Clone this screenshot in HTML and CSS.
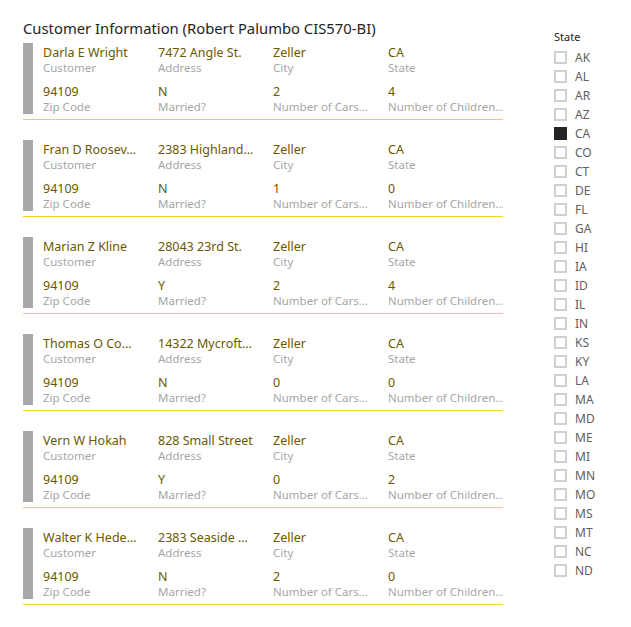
FILE: index.html
```html
<!DOCTYPE html>
<html>
<head>
<meta charset="utf-8">
<link rel="stylesheet" href="styles.css">
</head>
<body>
<div class="page">
  <section class="cards">
    <h1 class="title">Customer Information (Robert Palumbo CIS570-BI)</h1>
    <div class="card">
      <div class="bar"></div>
      <div class="fields">
        <div class="field"><div class="val">Darla E Wright</div><div class="lbl">Customer</div></div>
        <div class="field"><div class="val">7472 Angle St.</div><div class="lbl">Address</div></div>
        <div class="field"><div class="val">Zeller</div><div class="lbl">City</div></div>
        <div class="field"><div class="val">CA</div><div class="lbl">State</div></div>
        <div class="field"><div class="val">94109</div><div class="lbl">Zip Code</div></div>
        <div class="field"><div class="val">N</div><div class="lbl">Married?</div></div>
        <div class="field"><div class="val">2</div><div class="lbl">Number of Cars…</div></div>
        <div class="field"><div class="val">4</div><div class="lbl">Number of Children…</div></div>
      </div>
    </div>
    <div class="card">
      <div class="bar"></div>
      <div class="fields">
        <div class="field"><div class="val">Fran D Roosev…</div><div class="lbl">Customer</div></div>
        <div class="field"><div class="val">2383 Highland…</div><div class="lbl">Address</div></div>
        <div class="field"><div class="val">Zeller</div><div class="lbl">City</div></div>
        <div class="field"><div class="val">CA</div><div class="lbl">State</div></div>
        <div class="field"><div class="val">94109</div><div class="lbl">Zip Code</div></div>
        <div class="field"><div class="val">N</div><div class="lbl">Married?</div></div>
        <div class="field"><div class="val">1</div><div class="lbl">Number of Cars…</div></div>
        <div class="field"><div class="val">0</div><div class="lbl">Number of Children…</div></div>
      </div>
    </div>
    <div class="card">
      <div class="bar"></div>
      <div class="fields">
        <div class="field"><div class="val">Marian Z Kline</div><div class="lbl">Customer</div></div>
        <div class="field"><div class="val">28043 23rd St.</div><div class="lbl">Address</div></div>
        <div class="field"><div class="val">Zeller</div><div class="lbl">City</div></div>
        <div class="field"><div class="val">CA</div><div class="lbl">State</div></div>
        <div class="field"><div class="val">94109</div><div class="lbl">Zip Code</div></div>
        <div class="field"><div class="val">Y</div><div class="lbl">Married?</div></div>
        <div class="field"><div class="val">2</div><div class="lbl">Number of Cars…</div></div>
        <div class="field"><div class="val">4</div><div class="lbl">Number of Children…</div></div>
      </div>
    </div>
    <div class="card">
      <div class="bar"></div>
      <div class="fields">
        <div class="field"><div class="val">Thomas O Co…</div><div class="lbl">Customer</div></div>
        <div class="field"><div class="val">14322 Mycroft…</div><div class="lbl">Address</div></div>
        <div class="field"><div class="val">Zeller</div><div class="lbl">City</div></div>
        <div class="field"><div class="val">CA</div><div class="lbl">State</div></div>
        <div class="field"><div class="val">94109</div><div class="lbl">Zip Code</div></div>
        <div class="field"><div class="val">N</div><div class="lbl">Married?</div></div>
        <div class="field"><div class="val">0</div><div class="lbl">Number of Cars…</div></div>
        <div class="field"><div class="val">0</div><div class="lbl">Number of Children…</div></div>
      </div>
    </div>
    <div class="card">
      <div class="bar"></div>
      <div class="fields">
        <div class="field"><div class="val">Vern W Hokah</div><div class="lbl">Customer</div></div>
        <div class="field"><div class="val">828 Small Street</div><div class="lbl">Address</div></div>
        <div class="field"><div class="val">Zeller</div><div class="lbl">City</div></div>
        <div class="field"><div class="val">CA</div><div class="lbl">State</div></div>
        <div class="field"><div class="val">94109</div><div class="lbl">Zip Code</div></div>
        <div class="field"><div class="val">Y</div><div class="lbl">Married?</div></div>
        <div class="field"><div class="val">0</div><div class="lbl">Number of Cars…</div></div>
        <div class="field"><div class="val">2</div><div class="lbl">Number of Children…</div></div>
      </div>
    </div>
    <div class="card">
      <div class="bar"></div>
      <div class="fields">
        <div class="field"><div class="val">Walter K Hede…</div><div class="lbl">Customer</div></div>
        <div class="field"><div class="val">2383 Seaside …</div><div class="lbl">Address</div></div>
        <div class="field"><div class="val">Zeller</div><div class="lbl">City</div></div>
        <div class="field"><div class="val">CA</div><div class="lbl">State</div></div>
        <div class="field"><div class="val">94109</div><div class="lbl">Zip Code</div></div>
        <div class="field"><div class="val">N</div><div class="lbl">Married?</div></div>
        <div class="field"><div class="val">2</div><div class="lbl">Number of Cars…</div></div>
        <div class="field"><div class="val">0</div><div class="lbl">Number of Children…</div></div>
      </div>
    </div>
  </section>
  <aside class="slicer">
    <div class="slicer-title">State</div>
    <ul class="opts">
      <li class="opt"><span class="box"></span>AK</li>
      <li class="opt"><span class="box"></span>AL</li>
      <li class="opt"><span class="box"></span>AR</li>
      <li class="opt"><span class="box"></span>AZ</li>
      <li class="opt"><span class="box on"></span>CA</li>
      <li class="opt"><span class="box"></span>CO</li>
      <li class="opt"><span class="box"></span>CT</li>
      <li class="opt"><span class="box"></span>DE</li>
      <li class="opt"><span class="box"></span>FL</li>
      <li class="opt"><span class="box"></span>GA</li>
      <li class="opt"><span class="box"></span>HI</li>
      <li class="opt"><span class="box"></span>IA</li>
      <li class="opt"><span class="box"></span>ID</li>
      <li class="opt"><span class="box"></span>IL</li>
      <li class="opt"><span class="box"></span>IN</li>
      <li class="opt"><span class="box"></span>KS</li>
      <li class="opt"><span class="box"></span>KY</li>
      <li class="opt"><span class="box"></span>LA</li>
      <li class="opt"><span class="box"></span>MA</li>
      <li class="opt"><span class="box"></span>MD</li>
      <li class="opt"><span class="box"></span>ME</li>
      <li class="opt"><span class="box"></span>MI</li>
      <li class="opt"><span class="box"></span>MN</li>
      <li class="opt"><span class="box"></span>MO</li>
      <li class="opt"><span class="box"></span>MS</li>
      <li class="opt"><span class="box"></span>MT</li>
      <li class="opt"><span class="box"></span>NC</li>
      <li class="opt"><span class="box"></span>ND</li>
    </ul>
  </aside>
</div>
</body>
</html>
```

FILE: styles.css
```css
* { box-sizing: border-box; }
html, body { margin: 0; padding: 0; background: #fff; }
body { font-family: "Noto Sans", "Open Sans", sans-serif; }

.page {
  display: flex;
  padding-left: 23px;
}

.cards {
  width: 480px;
  display: flex;
  flex-direction: column;
}

.title {
  margin: 0;
  padding-top: 17px;
  height: 43px;
  font-size: 14.8px;
  line-height: 22px;
  font-weight: 400;
  color: #252423;
  white-space: nowrap;
}

.card {
  display: flex;
  align-items: flex-start;
  padding-bottom: 5px;
  border-bottom: 1px solid #f5d426;
  margin-bottom: 20px;
}

.bar {
  width: 10px;
  height: 71px;
  background: #a8a8a8;
  flex: none;
}

.fields {
  display: grid;
  grid-template-columns: repeat(4, 115px);
  row-gap: 8px;
  padding-top: 1px;
  padding-left: 10px;
}

.field { overflow: hidden; white-space: nowrap; }

.val {
  font-size: 12.5px;
  line-height: 17px;
  color: #6b5800;
}

.lbl {
  font-size: 11.5px;
  line-height: 14px;
  color: #a6a6a6;
}

.slicer {
  margin-left: 51px;
  padding-top: 29px;
}

.slicer-title {
  font-size: 11px;
  line-height: 16px;
  color: #252423;
  height: 19px;
}

.opts {
  list-style: none;
  margin: 0;
  padding: 0;
}

.opt {
  display: flex;
  align-items: center;
  height: 19px;
  font-size: 12px;
  color: #605e5c;
}

.box {
  width: 13px;
  height: 13px;
  border: 2px solid #d0d0d0;
  margin-right: 8px;
  flex: none;
}

.box.on {
  background: #252423;
  border-color: #252423;
}
```
